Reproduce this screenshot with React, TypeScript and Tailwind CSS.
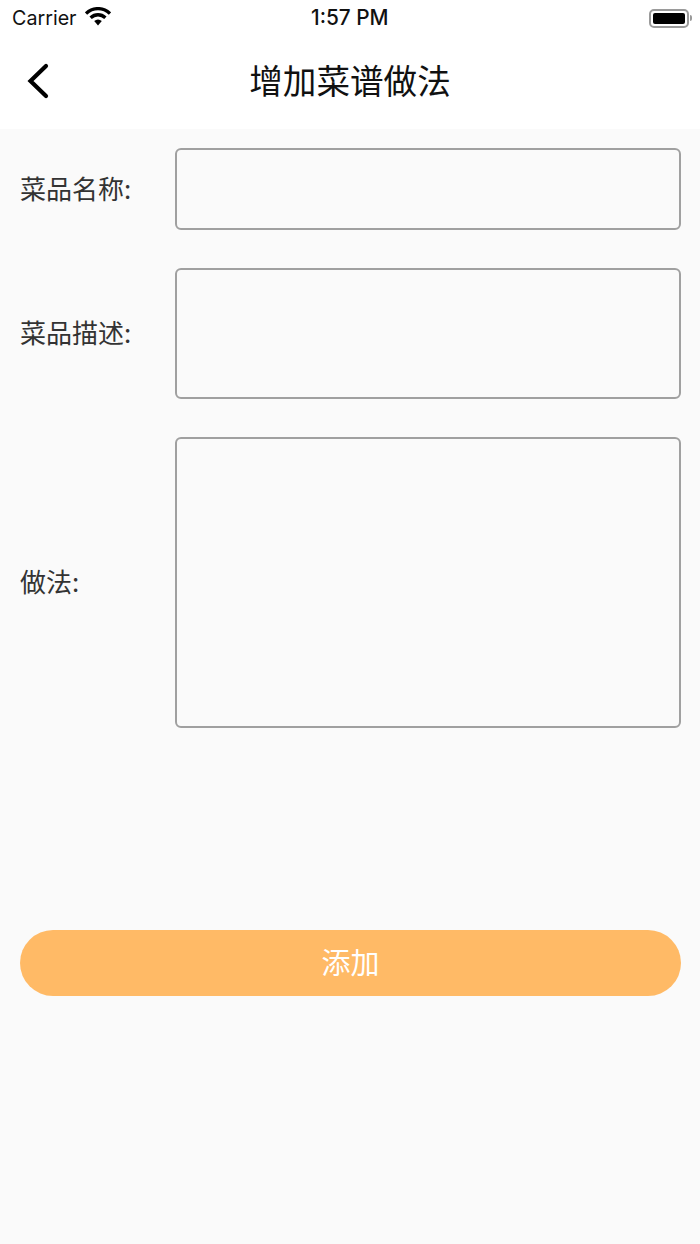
const cjk = { fontFamily: '"Noto Sans CJK SC", "Noto Sans", sans-serif' };

function Field({ label, height, mb }: { label: string; height: string; mb: string }) {
  return (
    <div className={`flex items-center pl-[20px] pr-[19px] ${mb}`}>
      <div className="mt-[-2px] w-[155.4px] shrink-0 text-[26px] leading-[34px] text-[#333333]" style={cjk}>
        {label}
      </div>
      <div className={`flex-1 rounded-[6px] border-2 border-[#a0a0a0] bg-[#fafafa] ${height}`} />
    </div>
  );
}

export default function App() {
  return (
    <div className="flex h-[1244px] w-[700px] flex-col overflow-hidden bg-[#fafafa]">
      <div className="h-[129px] shrink-0 bg-white">
        <div className="relative flex h-[36px] items-center justify-between pl-[12px] pr-[8px]">
          <div className="flex items-center gap-[8px]">
            <span className="mt-[1px] text-[19.7px] leading-none text-[#111]" style={{ fontFamily: 'Inter, sans-serif' }}>Carrier</span>
            <svg width="26" height="19" viewBox="0 0 26 19" className="mt-[-3px]">
              <path d="M1 6.6 C8 0 18 0 25 6.6" fill="none" stroke="#000" strokeWidth="3.4" />
              <path d="M5.6 10.8 C10 6.8 16 6.8 20.4 10.8" fill="none" stroke="#000" strokeWidth="3.4" />
              <path d="M9.2 14 C11.6 12 14.4 12 16.8 14 L13 18.4 Z" fill="#000" />
            </svg>
          </div>
          <span className="absolute left-[311px] top-[6px] text-[20.8px] font-medium leading-[24px] text-[#111]" style={{ fontFamily: 'Inter, sans-serif' }}>1:57 PM</span>
          <div className="flex items-center gap-[1px]">
            <div className="flex h-[19px] w-[40px] items-center rounded-[5px] border-2 border-[#9a9a9a] p-[2px]">
              <div className="h-full w-full rounded-[2px] bg-black" />
            </div>
            <div className="h-[6px] w-[2px] rounded-r-[2px] bg-[#9a9a9a]" />
          </div>
        </div>
        <div className="relative flex h-[93px] items-center justify-center">
          <svg width="24" height="36" viewBox="0 0 24 36" className="absolute left-[26px] top-[27px]">
            <path d="M20 3 L4.5 18 L20 33" fill="none" stroke="#000" strokeWidth="4.2" strokeLinecap="round" strokeLinejoin="miter" />
          </svg>
          <span className="mt-[-5px] text-[33.6px] leading-[46px] text-[#111]" style={cjk}>增加菜谱做法</span>
        </div>
      </div>
      <div className="pt-[19px]">
        <Field label="菜品名称:" height="h-[81.5px]" mb="mb-[38.5px]" />
        <Field label="菜品描述:" height="h-[130.5px]" mb="mb-[38.5px]" />
        <Field label="做法:" height="h-[290.5px]" mb="mb-[202.5px]" />
        <div className="ml-[20px] mr-[19px] flex h-[66px] items-center justify-center rounded-[33px] bg-[#ffba66] pb-[2px] text-[29px] text-white" style={cjk}>
          添加
        </div>
      </div>
    </div>
  );
}
